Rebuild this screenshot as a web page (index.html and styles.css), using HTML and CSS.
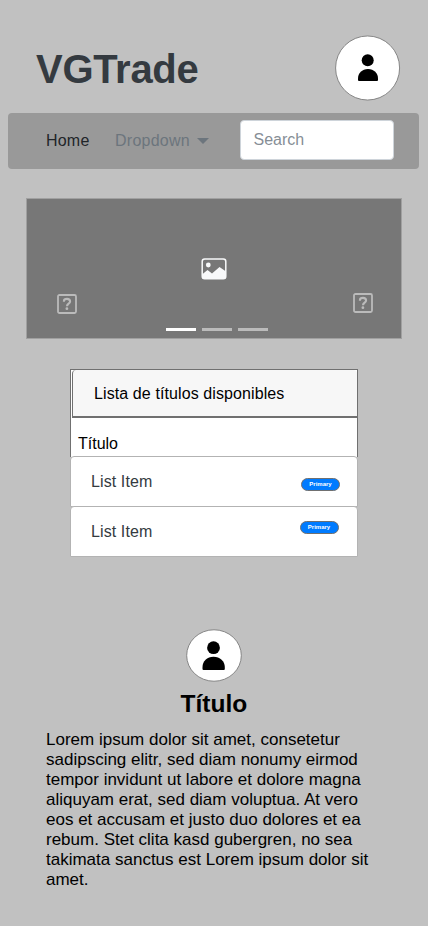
FILE: index.html
```html
<!DOCTYPE html>
<html lang="es">
<head>
<meta charset="utf-8">
<title>VGTrade</title>
<link rel="stylesheet" href="styles.css">
</head>
<body>
<header class="header">
  <h1 class="brand">VGTrade</h1>
  <svg class="avatar" width="66" height="66" viewBox="0 0 66 66">
    <circle cx="32.600" cy="33" r="32" fill="#fff" stroke="#707070" stroke-width=".8"/>
    <circle cx="32.700" cy="25.300" r="6"/>
    <path d="M23 43.500c0-5.200 4-9.500 10-9.500s10 4.300 10 9.500v1.500q0 1-1 1H24q-1 0-1-1z"/>
  </svg>
</header>
<nav class="navbar">
  <a class="home">Home</a>
  <a class="dropdown">Dropdown</a>
  <svg class="caret" width="12" height="6" viewBox="0 0 12 6"><path d="M0 0h12L6 6z" fill="#6c757d"/></svg>
  <div class="search">Search</div>
</nav>
<section class="carousel">
  <svg class="prev" width="20" height="20" viewBox="0 0 20 20"><rect x="1" y="1" width="18" height="18" rx="1.500" fill="none" stroke="#bbb" stroke-width="1.800"/><path d="M6.900 7.700V7.200Q7 4.900 10 4.900T13.100 7.500C13.100 9.700 10 9.600 10 12.200" fill="none" stroke="#bbb" stroke-width="2.100"/><circle cx="9.900" cy="14.700" r="1.400" fill="#bbb"/></svg>
  <svg class="picture" width="26" height="22" viewBox="0 0 26 22"><rect x="1.200" y="1" width="23.600" height="19.700" rx="2.500" fill="none" stroke="#f8f9fa" stroke-width="1.500"/><circle cx="7.300" cy="7" r="2.400" fill="#f8f9fa"/><path d="M1 16.500L6.500 12 11 15.500 18.500 9 25 13.500v5q0 2.500-2.500 2.500h-19Q1 21 1 18.500z" fill="#f8f9fa"/></svg>
  <svg class="next" width="20" height="20" viewBox="0 0 20 20"><rect x="1" y="1" width="18" height="18" rx="1.500" fill="none" stroke="#bbb" stroke-width="1.800"/><path d="M6.900 7.700V7.200Q7 4.900 10 4.900T13.100 7.500C13.100 9.700 10 9.600 10 12.200" fill="none" stroke="#bbb" stroke-width="2.100"/><circle cx="9.900" cy="14.700" r="1.400" fill="#bbb"/></svg>
  <div class="indicators"><span class="active"></span><span></span><span></span></div>
</section>
<section class="card">
  <div class="card-header"><h2 class="card-title">Lista de títulos disponibles</h2></div>
  <div class="card-body">Título</div>
  <div class="item first"><span>List Item</span><span class="badge">Primary</span></div>
  <div class="item last"><span>List Item</span><span class="badge">Primary</span></div>
</section>
<section class="profile">
  <svg class="portrait" width="56" height="53" viewBox="0 0 56 53">
    <ellipse cx="28" cy="26.500" rx="27.300" ry="25.700" fill="#fff" stroke="#707070" stroke-width=".8"/>
    <circle cx="27.500" cy="18.700" r="6.400"/>
    <path d="M16.500 38c0-6 4.500-10.300 11-10.300S38.800 32 38.800 38v2q0 1-1 1H17.500q-1 0-1-1z"/>
  </svg>
  <h2 class="profile-title">Título</h2>
  <p class="text">Lorem ipsum dolor sit amet, consetetur sadipscing elitr, sed diam nonumy eirmod tempor invidunt ut labore et dolore magna aliquyam erat, sed diam voluptua. At vero eos et accusam et justo duo dolores et ea rebum. Stet clita kasd gubergren, no sea takimata sanctus est Lorem ipsum dolor sit amet.</p>
</section>
</body>
</html>
```
FILE: styles.css
```css
* { box-sizing: border-box; }
body {
  margin: 0;
  height: 926px;
  overflow: hidden;
  background: #c1c1c1;
  font: 16px/24px "Liberation Sans", Arial, sans-serif;
  color: #000;
}
h1, h2, p { margin: 0; }
svg { display: block; flex: none; }
.header {
  display: flex;
  justify-content: space-between;
  height: 113px;
  padding: 35px 27px 0 36px;
}
.brand {
  margin-top: 10px;
  font-size: 40px;
  line-height: 48px;
  letter-spacing: -.3px;
  color: #343a40;
}
.navbar {
  display: flex;
  align-items: center;
  width: 411px;
  height: 56px;
  margin-left: 8px;
  padding-left: 38px;
  border-radius: 4px;
  background: #999;
}
.home { width: 69px; letter-spacing: .2px; color: #212529; }
.dropdown { width: 82px; letter-spacing: .25px; color: #6c757d; }
.caret { margin-top: -1px; }
.search {
  width: 154px;
  height: 40px;
  margin: -2px 0 0 30.500px;
  padding: 7px 13px;
  border: 1px solid #ced4da;
  border-radius: 4px;
  background: #fff;
  color: #868e96;
}
.carousel {
  display: grid;
  grid-template-columns: 1fr 26px 1fr;
  grid-template-rows: 59px 70px 9px;
  width: 376px;
  height: 141px;
  margin: 29px 0 0 26px;
  border: 1px solid #a0a0a0;
  background: #777;
}
.prev { grid-area: 2 / 1; margin: 36px 0 0 30px; }
.picture { grid-area: 2 / 2; }
.next { grid-area: 2 / 3; justify-self: end; margin: 35px 28px 0 0; }
.indicators { grid-area: 3 / 1 / 4 / 4; display: flex; justify-content: center; gap: 6px; margin-left: 6px; }
.indicators span { width: 30px; height: 3px; background: #bbb; }
.indicators .active { background: #fff; }
.card {
  width: 288px;
  height: 187px;
  margin: 30px 0 0 70px;
}
.card-header {
  height: 49px;
  padding-left: 1px;
  border: 1px solid #707070;
  border-bottom: 0;
  background: #fff;
}
.card-title {
  height: 48px;
  padding: 12px 21px;
  border: 1px solid #707070;
  border-width: 0 0 2px 1px;
  border-radius: 4px 4px 0 0;
  background: #f7f7f7;
  font-size: 16px;
  font-weight: 400;
  letter-spacing: .1px;
}
.card-body {
  height: 39px;
  padding: 14px 7px 0;
  border: 1px solid #707070;
  border-width: 0 1px;
  background: #fff;
}
.item {
  display: flex;
  justify-content: space-between;
  height: 51px;
  margin-top: -1px;
  padding: 13px 17px 0 20px;
  border: 1px solid #b3b3b3;
  border-radius: 4px 4px 0 0;
  background: #fff;
  color: #343a40;
  letter-spacing: .1px;
}
.last { padding-right: 18.500px; }
.badge {
  width: 39px;
  height: 13px;
  margin-top: 8px;
  border: 1px solid #707070;
  border-radius: 7px;
  background: #007bff;
  color: #fff;
  font-size: 6px;
  font-weight: 700;
  letter-spacing: 0;
  line-height: 11px;
  text-align: center;
}
.last .badge { margin-top: 1px; }
.profile { padding: 73px 46px 0; }
.portrait { margin-left: 140px; }
.profile-title {
  margin: 7px 0 0 134.500px;
  font-size: 24.500px;
  line-height: 30px;
}
.text {
  width: 330px;
  margin-top: 11px;
  font-size: 17px;
  line-height: 20px;
}
```
